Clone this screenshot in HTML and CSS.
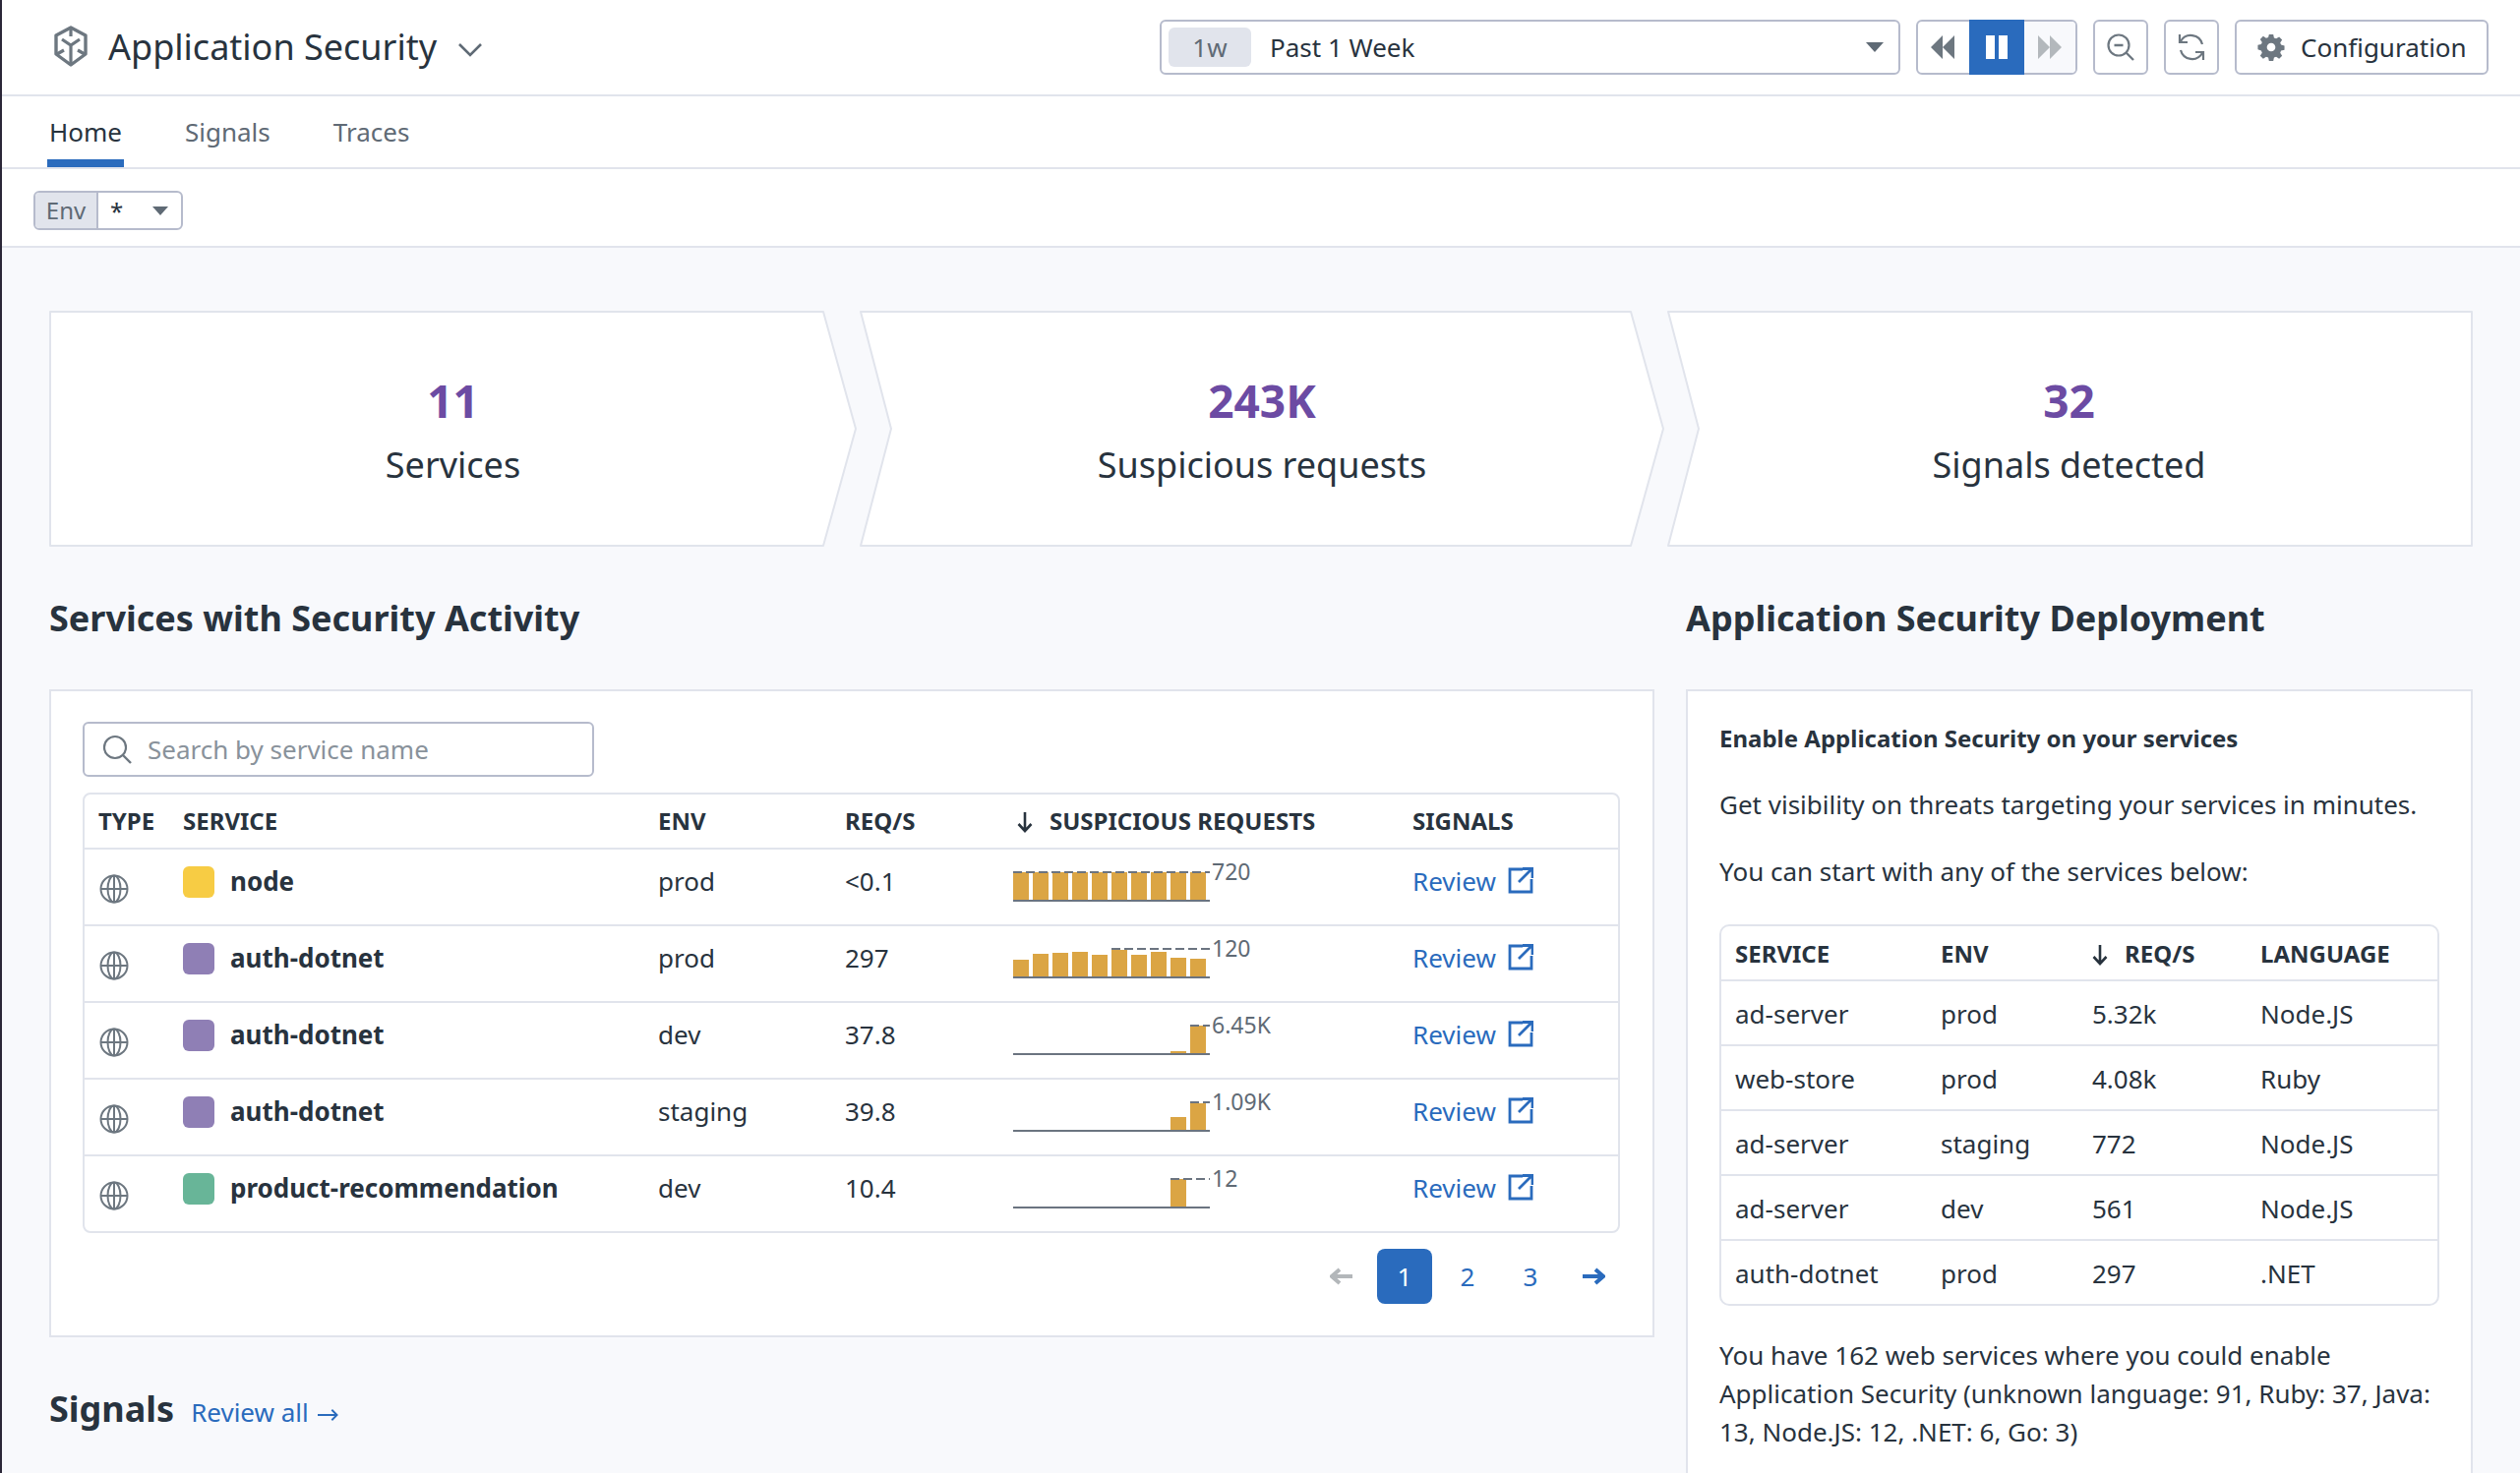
FILE: index.html
```html
<!DOCTYPE html>
<html lang="en">
<head>
<meta charset="utf-8">
<title>Application Security</title>
<link rel="stylesheet" href="styles.css">
</head>
<body>
<div class="app">
  <header class="topbar">
    <div class="brand">
      <svg class="logo" viewBox="0 0 34 42" fill="none"><path d="M17 2 L32 10 V29 L17 40 L2 29 V10 Z" stroke-width="3.4" stroke-linejoin="round"/><path d="M17 3 V11 M8 14 L17 20 L26 14 M17 20 V39 M3 29 L10 25 M31 29 L24 25" stroke-width="3.2"/></svg>
      <h1 class="brand-title">Application Security</h1>
      <svg class="brand-chevron" viewBox="0 0 26 15" fill="none"><path d="M2 2 L13 13 L24 2" stroke-width="2.6"/></svg>
    </div>
    <div class="controls">
      <div class="control date">
        <span class="date-chip">1w</span>
        <span class="date-label">Past 1 Week</span>
        <span class="caret caret-date"></span>
      </div>
      <div class="playback">
        <span class="play-btn rewind"><svg viewBox="0 0 24 24"><path d="M12 0 V24 L0 12 Z M24 0 V24 L12 12 Z"/></svg></span>
        <span class="play-btn pause"><svg viewBox="0 0 22 24"><path d="M0 0 H9 V24 H0 Z M13 0 H22 V24 H13 Z"/></svg></span>
        <span class="play-btn forward"><svg viewBox="0 0 24 24"><path d="M12 0 V24 L24 12 Z M0 0 V24 L12 12 Z"/></svg></span>
      </div>
      <button class="control icon-btn"><svg class="tool-icon" viewBox="0 0 28 28" fill="none"><circle cx="12" cy="12" r="10.5" stroke-width="2.2"/><path d="M7.5 12 H16.5 M19.5 19.5 L27 27" stroke-width="2.4"/></svg></button>
      <button class="control icon-btn"><svg class="tool-icon" viewBox="0 0 28 28" fill="none"><path d="M3 8 A12 12 0 0 1 25 11 M25 20 A12 12 0 0 1 3 17" stroke-width="2.2"/><path d="M2 1 V9 H10 M26 27 V19 H18" stroke-width="2.2"/></svg></button>
      <button class="control config">
        <svg class="gear" viewBox="0 0 24 24"><path fill-rule="evenodd" d="M10 0h4l.7 3.2 2 .8 2.8-1.8 2.8 2.8-1.8 2.8.8 2 3.2.7v4l-3.2.7-.8 2 1.8 2.8-2.8 2.8-2.8-1.8-2 .8-.7 3.2h-4l-.7-3.2-2-.8-2.8 1.8-2.8-2.8 1.8-2.8-.8-2L-.5 14v-4l3.2-.7.8-2-1.8-2.8 2.8-2.8 2.8 1.8 2-.8zM12 8a4 4 0 1 0 0 8 4 4 0 0 0 0-8z"/></svg>
        <span>Configuration</span>
      </button>
    </div>
  </header>

  <nav class="tabs">
    <a class="tab tab-active">Home</a>
    <a class="tab">Signals</a>
    <a class="tab">Traces</a>
  </nav>

  <div class="filters">
    <div class="env-filter">
      <span class="env-name">Env</span>
      <span class="env-value">*</span>
      <span class="caret caret-env"></span>
    </div>
  </div>

  <main class="main">
    <section class="funnel">
      <div class="stat">
        <svg class="stat-bg" viewBox="0 0 821 240"><polygon points="1,1 787,1 820,120 787,239 1,239"/></svg>
        <div class="stat-num">11</div>
        <div class="stat-label">Services</div>
      </div>
      <div class="stat">
        <svg class="stat-bg" viewBox="0 0 818 240"><polygon points="1,1 784,1 817,120 784,239 1,239 32,120"/></svg>
        <div class="stat-num">243K</div>
        <div class="stat-label">Suspicious requests</div>
      </div>
      <div class="stat stat-last">
        <svg class="stat-bg" viewBox="0 0 819 240"><polygon points="1,1 818,1 818,239 1,239 32,120"/></svg>
        <div class="stat-num">32</div>
        <div class="stat-label">Signals detected</div>
      </div>
    </section>

    <div class="columns">
      <div class="col-left">
        <h2 class="section-title">Services with Security Activity</h2>
        <section class="panel panel-services">
          <div class="search">
            <svg class="search-icon" viewBox="0 0 30 30" fill="none"><circle cx="13" cy="13" r="11" stroke-width="2.2"/><path d="M21 21 L29 29" stroke-width="2.4"/></svg>
            <span class="search-text">Search by service name</span>
          </div>
          <div class="table-box">
            <table class="data services-table">
              <thead>
                <tr>
                  <th>TYPE</th><th>SERVICE</th><th>ENV</th><th>REQ/S</th>
                  <th class="th-sorted"><svg class="sort" viewBox="0 0 16 22" fill="none"><path d="M8 1 V20 M1.5 13 L8 20 L14.5 13" stroke-width="2.6"/></svg>SUSPICIOUS REQUESTS</th>
                  <th>SIGNALS</th>
                </tr>
              </thead>
              <tbody>
                <tr>
                  <td><svg class="globe" viewBox="0 0 30 30" fill="none"><circle cx="15" cy="15" r="13.5"/><ellipse cx="15" cy="15" rx="6.5" ry="13.5"/><path d="M15 1.5 V28.5 M1.5 15 H28.5"/></svg></td>
                  <td><div class="svc"><span class="swatch swatch-yellow"></span><b>node</b></div></td>
                  <td>prod</td><td>&lt;0.1</td>
                  <td class="td-spark"><svg class="spark" viewBox="0 -10 270 70"><g class="bars"><rect x="0" y="10" width="16" height="29"/><rect x="20" y="10" width="16" height="29"/><rect x="40" y="10" width="16" height="29"/><rect x="60" y="10" width="16" height="29"/><rect x="80" y="10" width="16" height="29"/><rect x="100" y="10" width="16" height="29"/><rect x="120" y="10" width="16" height="29"/><rect x="140" y="10" width="16" height="29"/><rect x="160" y="10" width="16" height="29"/><rect x="180" y="10" width="16" height="29"/></g><path class="dash" d="M0 10 H200"/><path class="base" d="M0 39 H200"/><text x="202" y="18">720</text></svg></td>
                  <td><a class="review">Review<svg class="ext" viewBox="0 0 26 27" fill="none"><path d="M15 2 H2 V25 H24 V12 M11 15 L24 2 M15 1.5 H25 V11" stroke-width="2.8"/></svg></a></td>
                </tr>
                <tr>
                  <td><svg class="globe" viewBox="0 0 30 30" fill="none"><circle cx="15" cy="15" r="13.5"/><ellipse cx="15" cy="15" rx="6.5" ry="13.5"/><path d="M15 1.5 V28.5 M1.5 15 H28.5"/></svg></td>
                  <td><div class="svc"><span class="swatch swatch-purple"></span><b>auth-dotnet</b></div></td>
                  <td>prod</td><td>297</td>
                  <td class="td-spark"><svg class="spark" viewBox="0 -10 270 70"><g class="bars"><rect x="0" y="21" width="16" height="18"/><rect x="20" y="15" width="16" height="24"/><rect x="40" y="14" width="16" height="25"/><rect x="60" y="13" width="16" height="26"/><rect x="80" y="16" width="16" height="23"/><rect x="100" y="11" width="16" height="28"/><rect x="120" y="16" width="16" height="23"/><rect x="140" y="13" width="16" height="26"/><rect x="160" y="19" width="16" height="20"/><rect x="180" y="20" width="16" height="19"/></g><path class="dash" d="M100 10 H200"/><path class="base" d="M0 39 H200"/><text x="202" y="18">120</text></svg></td>
                  <td><a class="review">Review<svg class="ext" viewBox="0 0 26 27" fill="none"><path d="M15 2 H2 V25 H24 V12 M11 15 L24 2 M15 1.5 H25 V11" stroke-width="2.8"/></svg></a></td>
                </tr>
                <tr>
                  <td><svg class="globe" viewBox="0 0 30 30" fill="none"><circle cx="15" cy="15" r="13.5"/><ellipse cx="15" cy="15" rx="6.5" ry="13.5"/><path d="M15 1.5 V28.5 M1.5 15 H28.5"/></svg></td>
                  <td><div class="svc"><span class="swatch swatch-purple"></span><b>auth-dotnet</b></div></td>
                  <td>dev</td><td>37.8</td>
                  <td class="td-spark"><svg class="spark" viewBox="0 -10 270 70"><g class="bars"><rect x="160" y="36" width="16" height="3"/><rect x="180" y="10" width="16" height="29"/></g><path class="dash" d="M180 10 H200"/><path class="base" d="M0 39 H200"/><text x="202" y="18">6.45K</text></svg></td>
                  <td><a class="review">Review<svg class="ext" viewBox="0 0 26 27" fill="none"><path d="M15 2 H2 V25 H24 V12 M11 15 L24 2 M15 1.5 H25 V11" stroke-width="2.8"/></svg></a></td>
                </tr>
                <tr>
                  <td><svg class="globe" viewBox="0 0 30 30" fill="none"><circle cx="15" cy="15" r="13.5"/><ellipse cx="15" cy="15" rx="6.5" ry="13.5"/><path d="M15 1.5 V28.5 M1.5 15 H28.5"/></svg></td>
                  <td><div class="svc"><span class="swatch swatch-purple"></span><b>auth-dotnet</b></div></td>
                  <td>staging</td><td>39.8</td>
                  <td class="td-spark"><svg class="spark" viewBox="0 -10 270 70"><g class="bars"><rect x="160" y="25" width="16" height="14"/><rect x="180" y="11" width="16" height="28"/></g><path class="dash" d="M180 10 H200"/><path class="base" d="M0 39 H200"/><text x="202" y="18">1.09K</text></svg></td>
                  <td><a class="review">Review<svg class="ext" viewBox="0 0 26 27" fill="none"><path d="M15 2 H2 V25 H24 V12 M11 15 L24 2 M15 1.5 H25 V11" stroke-width="2.8"/></svg></a></td>
                </tr>
                <tr>
                  <td><svg class="globe" viewBox="0 0 30 30" fill="none"><circle cx="15" cy="15" r="13.5"/><ellipse cx="15" cy="15" rx="6.5" ry="13.5"/><path d="M15 1.5 V28.5 M1.5 15 H28.5"/></svg></td>
                  <td><div class="svc"><span class="swatch swatch-green"></span><b>product-recommendation</b></div></td>
                  <td>dev</td><td>10.4</td>
                  <td class="td-spark"><svg class="spark" viewBox="0 -10 270 70"><g class="bars"><rect x="160" y="10" width="16" height="29"/></g><path class="dash" d="M160 10 H200"/><path class="base" d="M0 39 H200"/><text x="202" y="18">12</text></svg></td>
                  <td><a class="review">Review<svg class="ext" viewBox="0 0 26 27" fill="none"><path d="M15 2 H2 V25 H24 V12 M11 15 L24 2 M15 1.5 H25 V11" stroke-width="2.8"/></svg></a></td>
                </tr>
              </tbody>
            </table>
          </div>
          <div class="pager">
            <svg class="pager-arrow pager-prev" viewBox="0 0 24 18" fill="none"><path d="M23 9 H3 M10 2 L2 9 L10 16" stroke-width="4"/></svg>
            <span class="page page-on">1</span>
            <span class="page">2</span>
            <span class="page">3</span>
            <svg class="pager-arrow pager-next" viewBox="0 0 24 18" fill="none"><path d="M1 9 H21 M14 2 L22 9 L14 16" stroke-width="4"/></svg>
          </div>
        </section>
        <div class="signals-head">
          <h2 class="section-title">Signals</h2>
          <a class="review-all">Review all<svg class="all-arrow" viewBox="0 0 22 14" fill="none"><path d="M0 7 H20 M15 1.5 L20.5 7 L15 12.5" stroke-width="2"/></svg></a>
        </div>
      </div>

      <div class="col-right">
        <h2 class="section-title">Application Security Deployment</h2>
        <section class="panel panel-deploy">
          <p class="deploy-strong">Enable Application Security on your services</p>
          <p class="deploy-p">Get visibility on threats targeting your services in minutes.</p>
          <p class="deploy-p">You can start with any of the services below:</p>
          <div class="table-box deploy-box">
            <table class="data deploy-table">
              <thead>
                <tr><th>SERVICE</th><th>ENV</th><th class="th-sorted"><svg class="sort" viewBox="0 0 16 22" fill="none"><path d="M8 1 V20 M1.5 13 L8 20 L14.5 13" stroke-width="2.6"/></svg>REQ/S</th><th>LANGUAGE</th></tr>
              </thead>
              <tbody>
                <tr><td>ad-server</td><td>prod</td><td>5.32k</td><td>Node.JS</td></tr>
                <tr><td>web-store</td><td>prod</td><td>4.08k</td><td>Ruby</td></tr>
                <tr><td>ad-server</td><td>staging</td><td>772</td><td>Node.JS</td></tr>
                <tr><td>ad-server</td><td>dev</td><td>561</td><td>Node.JS</td></tr>
                <tr><td>auth-dotnet</td><td>prod</td><td>297</td><td>.NET</td></tr>
              </tbody>
            </table>
          </div>
          <p class="deploy-note">You have 162 web services where you could enable Application Security (unknown language: 91, Ruby: 37, Java: 13, Node.JS: 12, .NET: 6, Go: 3)</p>
        </section>
      </div>
    </div>
  </main>
</div>
</body>
</html>
```
FILE: styles.css
```css
* { box-sizing: border-box; }
html, body { margin: 0; height: 100%; overflow: hidden; }
body {
  font-family: "Noto Sans", sans-serif;
  font-size: 26px;
  color: #28333e;
  background: #fff;
}
h1, h2, p { margin: 0; font-weight: 400; }
.app {
  height: 1498px;
  overflow: hidden;
  border-left: 2px solid #2b2738;
  display: flex;
  flex-direction: column;
}

/* top bar */
.topbar {
  flex: none;
  height: 98px;
  border-bottom: 2px solid #e1e4ec;
  display: flex;
  align-items: center;
  padding: 0 32px 0 53px;
}
.brand { display: flex; align-items: center; }
.logo { width: 34px; height: 42px; stroke: #6d7780; margin-top: -2px; }
.brand-title { font-size: 36px; line-height: 50px; margin-left: 21px; }
.brand-chevron { width: 26px; height: 15px; stroke: #5f6a75; margin-left: 21px; margin-top: 4px; }
.controls { margin-left: auto; display: flex; gap: 16px; height: 56px; }
.control {
  height: 56px;
  border: 2px solid #b6bbcc;
  border-radius: 6px;
  background: #fff;
  display: flex;
  align-items: center;
  font: inherit;
  color: inherit;
  padding: 0;
}
.date { width: 753px; padding: 0 15px 0 7px; }
.date-chip {
  width: 84px;
  height: 40px;
  border-radius: 6px;
  background: #e1e4ec;
  color: #5f6a75;
  text-align: center;
  line-height: 40px;
}
.date-label { margin-left: 19px; }
.caret {
  width: 0;
  height: 0;
  border-style: solid;
  border-color: #5f6a75 transparent transparent;
}
.caret-date { margin-left: auto; border-width: 10px 9px 0; }
.playback {
  width: 164px;
  height: 56px;
  display: flex;
  border: 2px solid #b6bbcc;
  border-radius: 6px;
  background: #fff;
}
.play-btn { display: flex; align-items: center; justify-content: center; }
.play-btn svg { height: 24px; }
.rewind { width: 52px; padding-right: 2px; }
.rewind svg { width: 24px; fill: #6d7780; }
.pause { width: 56px; margin: -2px 0; background: #2a6bbd; }
.pause svg { width: 22px; fill: #fff; }
.forward { width: 52px; background: #f8f9fc; border-radius: 0 4px 4px 0; }
.forward svg { width: 24px; fill: #b3b8bc; }
.icon-btn { width: 56px; justify-content: center; }
.tool-icon { width: 28px; height: 28px; stroke: #6d7780; }
.config { width: 258px; padding-left: 22px; }
.gear { width: 26px; height: 26px; fill: #6d7780; overflow: visible; }
.config span { margin-left: 17px; }

/* tabs */
.tabs {
  flex: none;
  height: 74px;
  border-bottom: 2px solid #e1e4ec;
  display: flex;
  gap: 60px;
  padding-left: 46px;
}
.tab {
  height: 72px;
  padding: 8px 2px 0;
  line-height: 56px;
  color: #5f6a75;
  border-bottom: 8px solid transparent;
}
.tab-active { color: #28333e; border-bottom-color: #2a6bbd; }

/* filter bar */
.filters {
  flex: none;
  height: 80px;
  border-bottom: 2px solid #e1e4ec;
  padding: 22px 0 0 32px;
}
.env-filter {
  width: 152px;
  height: 40px;
  border: 2px solid #b6bbcc;
  border-radius: 6px;
  display: flex;
  align-items: center;
  font-size: 24px;
}
.env-name {
  width: 64px;
  height: 36px;
  line-height: 36px;
  background: #e1e4ec;
  border-right: 2px solid #b6bbcc;
  border-radius: 4px 0 0 4px;
  color: #5f6a75;
  text-align: center;
}
.env-value { margin-left: 12px; }
.caret-env { margin-left: auto; margin-right: 13px; border-width: 9px 8px 0; }

/* main */
.main { flex: 1; background: #f8f9fc; padding: 64px 48px 0; }
.funnel { display: grid; grid-template-columns: 821px 818px 819px; gap: 3px; }
.stat {
  position: relative;
  height: 240px;
  display: flex;
  flex-direction: column;
  align-items: center;
  justify-content: center;
}
.stat-last { padding-right: 2px; }
.stat-bg { position: absolute; inset: 0; width: 100%; height: 100%; }
.stat-bg polygon { fill: #fff; stroke: #e1e4ec; stroke-width: 2; stroke-linejoin: round; }
.stat-num, .stat-label { position: relative; }
.stat-num { font-size: 46px; line-height: 56px; font-weight: 700; color: #6c4ba3; }
.stat-label { font-size: 36px; line-height: 40px; margin-top: 18px; }

.columns { display: grid; grid-template-columns: 1632px 800px; gap: 32px; margin-top: 49px; }
.section-title { font-size: 36px; line-height: 47px; font-weight: 700; }
.panel { margin-top: 49px; background: #fff; border: 2px solid #e1e4ec; }
.panel-services { height: 659px; padding: 31px 33px 0 32px; }

.search {
  width: 520px;
  height: 56px;
  border: 2px solid #b6bbcc;
  border-radius: 6px;
  display: flex;
  align-items: center;
  padding-left: 18px;
}
.search-icon { width: 30px; height: 30px; stroke: #6d7780; }
.search-text { margin-left: 16px; color: #89929b; }

.table-box { border: 2px solid #e1e4ec; border-radius: 8px; margin-top: 16px; overflow: hidden; }
.data { width: 100%; border-collapse: separate; border-spacing: 0; table-layout: fixed; }
.data th {
  height: 56px;
  padding: 0 0 0 14px;
  font-size: 24px;
  font-weight: 700;
  text-align: left;
  border-bottom: 2px solid #e1e4ec;
}
.data td { padding: 15px 0 0 14px; vertical-align: top; line-height: 36px; border-bottom: 2px solid #e1e4ec; }
.data tbody tr:last-child td { border-bottom: 0; }
.services-table th { padding-bottom: 2px; }
.services-table td { height: 78px; padding-top: 14px; }
.services-table th:nth-child(1) { width: 86px; }
.services-table th:nth-child(2) { width: 483px; }
.services-table th:nth-child(3) { width: 190px; }
.services-table th:nth-child(4) { width: 171px; }
.services-table th:nth-child(5) { width: 406px; }
.services-table tbody tr:last-child td { height: 76px; }
.sort { width: 16px; height: 22px; stroke: #28333e; margin: 0 17px 0 4px; vertical-align: -3px; }
.globe { display: block; width: 30px; height: 30px; margin: 11px 0 0 1px; stroke: #6d7780; stroke-width: 2; }
.svc { display: flex; align-items: center; }
.svc b { font-weight: 700; margin-left: 16px; }
.swatch { width: 32px; height: 32px; border-radius: 6px; margin-top: 1px; }
.swatch-yellow { background: #f7cc44; }
.swatch-purple { background: #8f7fb5; }
.swatch-green { background: #68b598; }
.services-table .td-spark { padding-top: 3px; }
.spark { display: block; width: 270px; height: 70px; }
.bars rect { fill: #dba544; }
.dash { stroke: #6b7480; stroke-width: 2; stroke-dasharray: 9 4; fill: none; }
.base { stroke: #6b7480; stroke-width: 2; fill: none; }
.spark text { font-size: 23px; fill: #5f6a75; }
.review { display: flex; align-items: center; color: #2a6bbd; }
.ext { width: 26px; height: 27px; stroke: #2a6bbd; margin-left: 12px; margin-top: -2px; }

.pager { display: flex; align-items: center; justify-content: flex-end; gap: 8px; margin-top: 16px; padding-right: 15px; }
.pager-arrow { width: 24px; height: 18px; }
.pager-prev { stroke: #b3b7ba; margin-right: 16px; }
.pager-next { stroke: #2a6bbd; margin-left: 16px; }
.page {
  width: 56px;
  height: 56px;
  border-radius: 8px;
  line-height: 56px;
  text-align: center;
  color: #2a6bbd;
}
.page-on { background: #2a6bbd; color: #fff; }

.signals-head { display: flex; align-items: baseline; gap: 17px; margin-top: 49px; }
.review-all { color: #2a6bbd; }
.all-arrow { width: 21px; height: 14px; stroke: #2a6bbd; margin-left: 9px; }

.panel-deploy { padding: 28px 32px 0; height: 900px; }
.panel-deploy p { line-height: 39px; }
.deploy-strong { font-size: 24px; font-weight: 700 !important; margin-bottom: 1px !important; }
.deploy-p { margin-top: 29px !important; }
.deploy-box { margin-top: 34px; border-radius: 10px; }
.deploy-table th:nth-child(1) { width: 209px; }
.deploy-table th:nth-child(2) { width: 154px; }
.deploy-table th:nth-child(3) { width: 171px; }
.deploy-table td { height: 66px; }
.deploy-table tbody tr:last-child td { height: 64px; }
.deploy-table .sort { margin-left: 0; }
.deploy-note { margin-top: 31px !important; }
```
